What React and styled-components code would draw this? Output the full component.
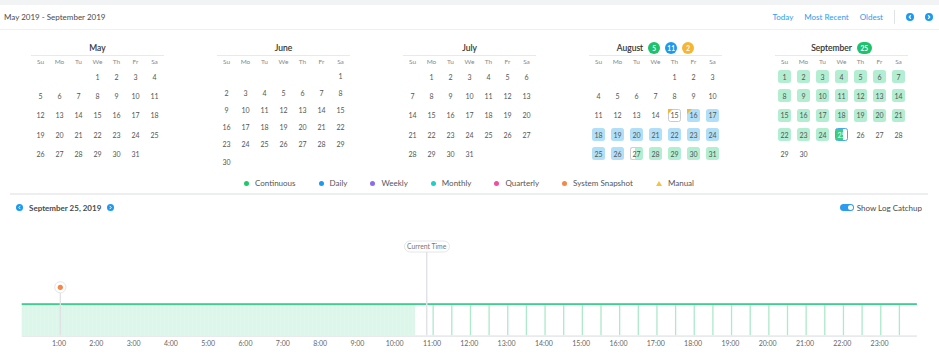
import React from 'react';
import styled, { createGlobalStyle, css } from 'styled-components';

const GlobalStyle = createGlobalStyle`
  html, body { margin: 0; padding: 0; background: #fff; }
  body { font-family: Lato, "Open Sans", Arial, sans-serif; color: #4a4a4a; }
`;

const Page = styled.div`
  width: 939px;
  height: 356px;
  overflow: hidden;
  background: #fff;
`;

const TopStrip = styled.div`
  height: 5px;
  background: #f2f3f5;
`;

const Header = styled.header`
  height: 24px;
  border-bottom: 1px solid #eef0f2;
  display: flex;
  align-items: center;
  justify-content: space-between;
  padding: 0 6px 0 4px;
`;

const RangeTitle = styled.div`
  font-size: 8px;
  color: #4a4a4a;
`;

const HeaderNav = styled.nav`
  display: flex;
  align-items: center;
  gap: 11px;
`;

const NavLink = styled.span`
  font-size: 8px;
  color: #2d9cf0;
`;

const NavDivider = styled.span`
  width: 1px;
  height: 14px;
  background: #dfe2e6;
`;

const IconWrap = styled.span`
  display: flex;
  width: ${p => p.$size}px;
  height: ${p => p.$size}px;
`;

const RoundArrow = ({ dir, size = 8 }) => (
  <IconWrap $size={size}>
    <svg width={size} height={size} viewBox="0 0 8 8">
      <circle cx="4" cy="4" r="4" fill="#1a9af0" />
      <path
        d={dir === 'left' ? 'M4.6 2.5 L3.2 4 L4.6 5.5' : 'M3.4 2.5 L4.8 4 L3.4 5.5'}
        stroke="#fff"
        strokeWidth="1.1"
        fill="none"
        strokeLinecap="round"
        strokeLinejoin="round"
      />
    </svg>
  </IconWrap>
);

const CalendarSection = styled.section`
  height: 143px;
  display: flex;
  align-items: flex-start;
  gap: 53px;
  padding-left: 31px;
`;

const Month = styled.div`
  width: 133px;
`;

const MonthHead = styled.div`
  height: 26px;
  box-sizing: border-box;
  padding-top: 11px;
  border-bottom: 1px solid #e8e9eb;
  display: flex;
  align-items: center;
  justify-content: center;
  gap: 5px;
`;

const MonthName = styled.span`
  font-size: 8.5px;
  font-weight: 400;
  color: #2f2f2f;
  -webkit-text-stroke: 0.15px #2f2f2f;
`;

const Badge = styled.span`
  height: 12px;
  min-width: ${p => (p.$wide ? 15 : 12)}px;
  padding: 0 2px;
  box-sizing: border-box;
  border-radius: 6px;
  background: ${p => p.$color};
  color: #fff;
  font-size: 6.5px;
  font-weight: 700;
  display: flex;
  align-items: center;
  justify-content: center;
`;

const WeekdayRow = styled.div`
  height: 11px;
  display: grid;
  grid-template-columns: repeat(7, 19px);
  justify-items: center;
  align-items: center;
  font-size: 6.5px;
  color: #888;
`;

const DaysGrid = styled.div`
  display: grid;
  grid-template-columns: repeat(7, 19px);
  grid-auto-rows: ${p => p.$rowH}px;
  justify-items: center;
  align-items: center;
`;

const variants = {
  plain: css``,
  daily: css`background: #b2dff8;`,
  cont: css`background: #b3eed3;`,
  outline: css`
    background: #fff;
    border: 1px solid #c9cbce;
  `,
  split: css`
    background: linear-gradient(90deg, #fff 0 40%, #b3eed3 40%);
    border: 1px solid #cfd1d4;
    border-right-color: #b3eed3;
  `,
  selected: css`
    background: linear-gradient(90deg, #3ccf7e 0 62%, #fff 62%);
    border: 1.5px solid #4aa7f2;
    color: #fff;
  `,
};

const Day = styled.div`
  position: relative;
  width: 13px;
  height: 13px;
  box-sizing: border-box;
  border-radius: 2.5px;
  display: flex;
  align-items: center;
  justify-content: center;
  font-size: 7px;
  color: #555;
  ${p => p.$col && css`grid-column-start: ${p.$col};`}
  ${p => variants[p.$variant]}
  ${p =>
    p.$manual &&
    css`
      &::before {
        content: '';
        position: absolute;
        left: ${p.$variant === 'outline' ? -1 : 0}px;
        top: ${p.$variant === 'outline' ? -1 : 0}px;
        width: 0;
        height: 0;
        border-top: 5px solid #f5b731;
        border-right: 5px solid transparent;
      }
    `}
`;

const Legend = styled.div`
  height: 20px;
  margin: 0 11px 0 10px;
  border-bottom: 2px solid #eceef0;
  display: flex;
  align-items: center;
  justify-content: center;
  gap: 23px;
`;

const LegendItem = styled.div`
  display: flex;
  align-items: center;
  gap: 6px;
  font-size: 8px;
  color: #555;
`;

const Dot = styled.span`
  width: 5px;
  height: 5px;
  border-radius: 50%;
  background: ${p => p.$color};
`;

const Tri = styled.span`
  width: 0;
  height: 0;
  border-left: 3px solid transparent;
  border-right: 3px solid transparent;
  border-bottom: 5px solid #f5c242;
`;

const DateBar = styled.div`
  height: 25px;
  display: flex;
  align-items: center;
  justify-content: space-between;
  padding: 0 17px 0 16px;
`;

const DateNav = styled.div`
  display: flex;
  align-items: center;
  gap: 6px;
`;

const DateText = styled.span`
  font-size: 8px;
  font-weight: 700;
  color: #4a4a4a;
`;

const ToggleWrap = styled.label`
  display: flex;
  align-items: center;
  gap: 3px;
  font-size: 8px;
  color: #4a4a4a;
`;

const ToggleTrack = styled.span`
  position: relative;
  width: 14px;
  height: 7px;
  border-radius: 4px;
  background: #2d9cf0;
  &::after {
    content: '';
    position: absolute;
    right: 1px;
    top: 1px;
    width: 5px;
    height: 5px;
    border-radius: 50%;
    background: #fff;
  }
`;

const TimelineArea = styled.div`
  height: 136px;
  svg { display: block; }
`;

const months = [
  { name: 'May', start: 3, days: 31 },
  { name: 'June', start: 6, days: 30 },
  { name: 'July', start: 1, days: 31 },
  {
    name: 'August',
    start: 4,
    days: 31,
    badges: [
      { c: '#1ec26b', t: '5' },
      { c: '#1a9af0', t: '11' },
      { c: '#f5b731', t: '2' },
    ],
  },
  { name: 'September', start: 0, days: 30, badges: [{ c: '#1ec26b', t: '25', wide: true }] },
];

const weekdays = ['Su', 'Mo', 'Tu', 'We', 'Th', 'Fr', 'Sa'];

function cellFor(month, d) {
  if (month === 'August') {
    if (d === 15) return { v: 'outline', m: true };
    if (d === 16) return { v: 'daily', m: true };
    if (d >= 17 && d <= 26) return { v: 'daily' };
    if (d === 27) return { v: 'split' };
    if (d >= 28) return { v: 'cont' };
  }
  if (month === 'September') {
    if (d <= 24) return { v: 'cont' };
    if (d === 25) return { v: 'selected' };
  }
  return { v: 'plain' };
}

const MonthCalendar = ({ m }) => {
  const weeks = Math.ceil((m.start + m.days) / 7);
  const rowH = weeks === 6 ? 17.2 : 19.3;
  const days = Array.from({ length: m.days }, (_, i) => i + 1);
  return (
    <Month>
      <MonthHead>
        <MonthName>{m.name}</MonthName>
        {m.badges &&
          m.badges.map((b, i) => (
            <Badge key={i} $color={b.c} $wide={b.wide}>
              {b.t}
            </Badge>
          ))}
      </MonthHead>
      <WeekdayRow>
        {weekdays.map(w => (
          <span key={w}>{w}</span>
        ))}
      </WeekdayRow>
      <DaysGrid $rowH={rowH}>
        {days.map(d => {
          const c = cellFor(m.name, d);
          return (
            <Day key={d} $col={d === 1 ? m.start + 1 : undefined} $variant={c.v} $manual={c.m}>
              {d}
            </Day>
          );
        })}
      </DaysGrid>
    </Month>
  );
};

const legend = [
  { label: 'Continuous', color: '#1ec96b' },
  { label: 'Daily', color: '#1a9af0' },
  { label: 'Weekly', color: '#8a6cf0' },
  { label: 'Monthly', color: '#1ccfc9' },
  { label: 'Quarterly', color: '#f04fa0' },
  { label: 'System Snapshot', color: '#f5874a' },
  { label: 'Manual', tri: true },
];

const X0 = 21.7;
const HOUR = 37.3;
const xAt = h => X0 + h * HOUR;

const TimelineChart = () => {
  const halfLines = [];
  for (let t = 11; t < 24; t += 0.5) halfLines.push(t);
  const hours = Array.from({ length: 23 }, (_, i) => i + 1);
  const fillEnd = 415;
  const curX = 426.7;
  return (
    <svg width="939" height="136" viewBox="0 0 939 136">
      <defs>
        <pattern id="stripes" width="4" height="10" patternUnits="userSpaceOnUse">
          <rect width="4" height="10" fill="#dcf6e9" />
          <rect width="1" height="10" fill="#dff7ec" />
        </pattern>
      </defs>
      <rect x={X0} y="84.7" width={fillEnd - X0} height="30.6" fill="url(#stripes)" />
      {halfLines.map(t => (
        <rect key={t} x={xAt(t) + 0.5} y="84.7" width="1.3" height="30.6" fill="#ade9cb" />
      ))}
      <rect x={X0} y="83.2" width={xAt(24) - X0} height="1.8" fill="#3ccf8e" />
      <rect x={X0} y="115.3" width={xAt(24) - X0} height="1.6" fill="#e6e8eb" />
      <line x1="60.3" y1="73" x2="60.3" y2="115.3" stroke="#dfe1e4" strokeWidth="1.3" />
      <circle cx="60.3" cy="67.3" r="5.6" fill="#fff" stroke="#e3e5e8" strokeWidth="1" />
      <circle cx="60.3" cy="67.3" r="2.6" fill="#f5874a" />
      <line x1={curX} y1="32" x2={curX} y2="115.3" stroke="#dfe2e6" strokeWidth="1.5" />
      <rect x="404.5" y="21" width="45" height="11" rx="5.5" fill="#fff" stroke="#dcdfe3" strokeWidth="0.8" />
      <text x={curX} y="28.8" textAnchor="middle" fontSize="6.8" fill="#777" fontFamily="Lato, Arial, sans-serif">
        Current Time
      </text>
      {hours.map(h => (
        <text
          key={h}
          x={xAt(h)}
          y="126.3"
          textAnchor="middle"
          fontSize="7"
          fill="#666"
          fontFamily="Lato, Arial, sans-serif"
        >
          {h}:00
        </text>
      ))}
    </svg>
  );
};

export default function App() {
  return (
    <Page>
      <GlobalStyle />
      <TopStrip />
      <Header>
        <RangeTitle>May 2019 - September 2019</RangeTitle>
        <HeaderNav>
          <NavLink>Today</NavLink>
          <NavLink>Most Recent</NavLink>
          <NavLink>Oldest</NavLink>
          <NavDivider />
          <RoundArrow dir="left" />
          <RoundArrow dir="right" />
        </HeaderNav>
      </Header>
      <CalendarSection>
        {months.map(m => (
          <MonthCalendar key={m.name} m={m} />
        ))}
      </CalendarSection>
      <Legend>
        {legend.map(l => (
          <LegendItem key={l.label}>
            {l.tri ? <Tri /> : <Dot $color={l.color} />}
            {l.label}
          </LegendItem>
        ))}
      </Legend>
      <DateBar>
        <DateNav>
          <RoundArrow dir="left" size={7} />
          <DateText>September 25, 2019</DateText>
          <RoundArrow dir="right" size={7} />
        </DateNav>
        <ToggleWrap>
          <ToggleTrack />
          Show Log Catchup
        </ToggleWrap>
      </DateBar>
      <TimelineArea>
        <TimelineChart />
      </TimelineArea>
    </Page>
  );
}
